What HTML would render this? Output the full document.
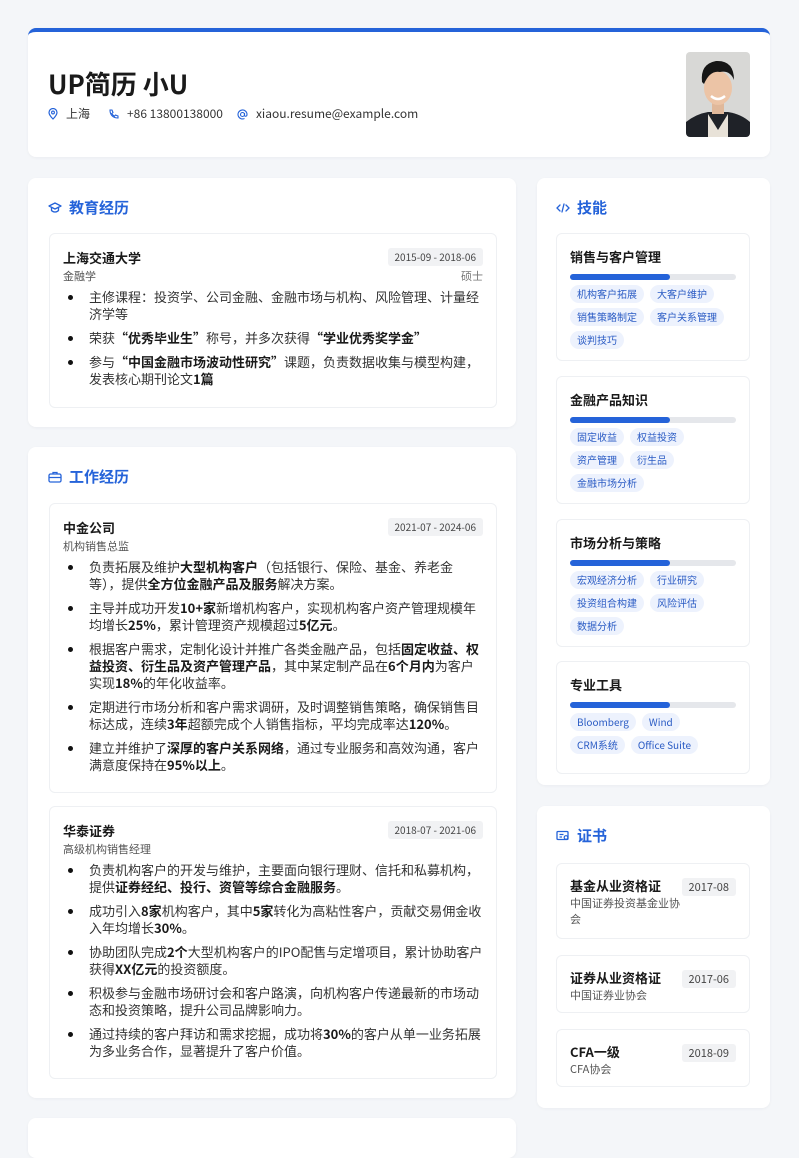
<!DOCTYPE html>
<html><head><meta charset="utf-8"><style>
*{box-sizing:border-box;margin:0;padding:0}
body{width:799px;height:1130px;background:#f4f6f9;font-family:"Noto Sans CJK SC","Liberation Sans",sans-serif;color:#333;position:relative;overflow:hidden}
.card{position:absolute;background:#fff;border-radius:8px;box-shadow:0 1px 3px rgba(0,0,0,.04)}
.hdr{left:28px;top:28px;width:742px;height:129px;border-top:4px solid #2563d9}
.name{position:absolute;left:20px;top:36px;font-size:26px;font-weight:700;color:#1a1a1a;line-height:32px}
.contact{position:absolute;left:20px;top:74px;font-size:12px;color:#333;display:flex;line-height:16px}
.contact span{display:flex;align-items:center;margin-right:14px}
.contact svg{margin-right:8px}
.photo{position:absolute;left:658px;top:20px;width:64px;height:85px;border-radius:4px;overflow:hidden}
.sec{font-size:15px;font-weight:700;color:#2563d9;display:flex;align-items:center;position:absolute;left:20px;top:20px;line-height:20px}
.sec svg{margin-right:7px}
.box{position:absolute;border:1px solid #eef0f3;border-radius:6px;background:#fff}
.l .box{left:21px;width:448px;padding:13px 13px 0 13px}
.t{display:flex;justify-content:space-between;align-items:center;height:20px}
.t b{font-size:13px;color:#1a1a1a;font-weight:700}
.date{font-size:10px;background:#f1f2f4;color:#444;padding:2px 7px;border-radius:3px;line-height:14px;white-space:nowrap}
.sub{display:flex;justify-content:space-between;font-size:11px;color:#555;line-height:16px;margin-top:1px}
ul{list-style:none;margin-top:4px}
li{position:relative;padding-left:26px;font-size:13px;line-height:17px;color:#333;margin-bottom:7px}
li:before{content:"";position:absolute;left:5px;top:7px;width:5px;height:5px;border-radius:50%;background:#111}
li b{color:#1a1a1a}
.r .box{left:19px;width:194px;padding:13px 13px 0 13px}
.sk{font-size:13px;font-weight:700;color:#1a1a1a;line-height:20px}
.bar{height:6px;background:#e5e7eb;border-radius:3px;margin-top:7px;margin-bottom:5px}
.bar i{display:block;width:60%;height:6px;background:#2563d9;border-radius:3px}
.tags{display:flex;flex-wrap:wrap;gap:5px 6px}
.tag{font-size:10px;color:#2a5bc4;background:#edf2fd;border-radius:9px;padding:0 7px;line-height:18px;white-space:nowrap}
.ct{display:flex;justify-content:space-between;align-items:flex-start;gap:6px;line-height:16px}
.ct>div{flex:1;min-width:0}
.ct b{display:block;font-size:13px;color:#1a1a1a;line-height:18px;margin-top:0}
.org{font-size:11px;color:#555;line-height:16px;width:112px}
.ct .date{margin-top:1px;flex:none}
</style></head><body>
<div class="card hdr">
<div class="name">UP简历 小U</div>
<div class="contact">
<span><svg width="10" height="12" viewBox="0 0 10 12"><path d="M5 11C2 8 1 6 1 4.5a4 4 0 0 1 8 0C9 6 8 8 5 11z" fill="none" stroke="#2563d9" stroke-width="1.2"/><circle cx="5" cy="4.5" r="1.4" fill="none" stroke="#2563d9" stroke-width="1.1"/></svg>上海</span>
<span style="margin-left:4px"><svg width="11" height="11" viewBox="0 0 11 11"><path d="M2 1l2 0 1 2.5-1.2 1a6 6 0 0 0 2.7 2.7l1-1.2 2.5 1v2c-5 0-8-3-8-8z" fill="none" stroke="#2563d9" stroke-width="1.1"/></svg>+86 13800138000</span>
<span><svg width="11" height="11" viewBox="0 0 11 11"><circle cx="5.5" cy="5.5" r="2" fill="none" stroke="#2563d9" stroke-width="1.1"/><path d="M7.5 4v2.2c0 1.5 2.5 1.5 2.5-.7A4.5 4.5 0 1 0 7.5 9.5" fill="none" stroke="#2563d9" stroke-width="1.1"/></svg>xiaou.resume@example.com</span>
</div>
<div class="photo"><svg width="64" height="85" viewBox="0 0 64 85"><rect width="64" height="85" fill="#d8d8d6"/><path d="M0 70 Q10 62 22 60 L42 60 Q55 62 64 70 L64 85 L0 85z" fill="#1f2228"/><path d="M22 62 L32 78 L42 62 L42 85 L22 85z" fill="#e8e2d8"/><rect x="26" y="48" width="12" height="14" fill="#e0b89a"/><ellipse cx="32" cy="36" rx="14" ry="17" fill="#ecc4a6"/><path d="M16 30 Q14 12 30 9 Q48 8 48 28 Q44 18 34 20 Q24 18 18 32z" fill="#161616"/><path d="M25 44 Q32 50 39 44" stroke="#fff" stroke-width="2.5" fill="none"/></svg></div>
</div>

<div class="card l" style="left:28px;top:178px;width:488px;height:249px">
<div class="sec"><svg width="14" height="12" viewBox="0 0 14 12"><path d="M7 1L1 4l6 3 6-3z M3.5 5.5v3c2 2 5 2 7 0v-3" fill="none" stroke="#2563d9" stroke-width="1.3" stroke-linejoin="round"/></svg>教育经历</div>
<div class="box" style="top:55px;height:175px">
<div class="t"><b>上海交通大学</b><span class="date">2015-09 - 2018-06</span></div>
<div class="sub"><span>金融学</span><span style="color:#777">硕士</span></div>
<ul>
<li>主修课程：投资学、公司金融、金融市场与机构、风险管理、计量经济学等</li>
<li>荣获<b>“优秀毕业生”</b>称号，并多次获得<b>“学业优秀奖学金”</b></li>
<li>参与<b>“中国金融市场波动性研究”</b>课题，负责数据收集与模型构建，发表核心期刊论文<b>1篇</b></li>
</ul></div>
</div>

<div class="card l" style="left:28px;top:447px;width:488px;height:651px">
<div class="sec"><svg width="14" height="12" viewBox="0 0 14 12"><rect x="1" y="3" width="12" height="8" rx="1.5" fill="none" stroke="#2563d9" stroke-width="1.3"/><path d="M5 3V1.5h4V3M1 6.5h12" fill="none" stroke="#2563d9" stroke-width="1.3"/></svg>工作经历</div>
<div class="box" style="top:56px;height:290px">
<div class="t"><b>中金公司</b><span class="date">2021-07 - 2024-06</span></div>
<div class="sub"><span>机构销售总监</span></div>
<ul>
<li>负责拓展及维护<b>大型机构客户</b>（包括银行、保险、基金、养老金等），提供<b>全方位金融产品及服务</b>解决方案。</li>
<li>主导并成功开发<b>10+家</b>新增机构客户，实现机构客户资产管理规模年均增长<b>25%</b>，累计管理资产规模超过<b>5亿元</b>。</li>
<li>根据客户需求，定制化设计并推广各类金融产品，包括<b>固定收益、权益投资、衍生品及资产管理产品</b>，其中某定制产品在<b>6个月内</b>为客户实现<b>18%</b>的年化收益率。</li>
<li>定期进行市场分析和客户需求调研，及时调整销售策略，确保销售目标达成，连续<b>3年</b>超额完成个人销售指标，平均完成率达<b>120%</b>。</li>
<li>建立并维护了<b>深厚的客户关系网络</b>，通过专业服务和高效沟通，客户满意度保持在<b>95%以上</b>。</li>
</ul></div>
<div class="box" style="top:359px;height:273px">
<div class="t"><b>华泰证券</b><span class="date">2018-07 - 2021-06</span></div>
<div class="sub"><span>高级机构销售经理</span></div>
<ul>
<li>负责机构客户的开发与维护，主要面向银行理财、信托和私募机构，提供<b>证券经纪、投行、资管等综合金融服务</b>。</li>
<li>成功引入<b>8家</b>机构客户，其中<b>5家</b>转化为高粘性客户，贡献交易佣金收入年均增长<b>30%</b>。</li>
<li>协助团队完成<b>2个</b>大型机构客户的IPO配售与定增项目，累计协助客户获得<b>XX亿元</b>的投资额度。</li>
<li>积极参与金融市场研讨会和客户路演，向机构客户传递最新的市场动态和投资策略，提升公司品牌影响力。</li>
<li>通过持续的客户拜访和需求挖掘，成功将<b>30%</b>的客户从单一业务拓展为多业务合作，显著提升了客户价值。</li>
</ul></div>
</div>
<div class="card" style="left:28px;top:1118px;width:488px;height:40px"></div>

<div class="card r" style="left:537px;top:178px;width:233px;height:607px">
<div class="sec" style="left:19px"><svg width="14" height="12" viewBox="0 0 14 12"><path d="M4 3L1 6l3 3M10 3l3 3-3 3M8 2L6 10" fill="none" stroke="#2563d9" stroke-width="1.3" stroke-linecap="round"/></svg>技能</div>
<div class="box" style="top:55px;height:128px"><div class="sk">销售与客户管理</div><div class="bar"><i></i></div><div class="tags"><span class="tag">机构客户拓展</span><span class="tag">大客户维护</span><span class="tag">销售策略制定</span><span class="tag">客户关系管理</span><span class="tag">谈判技巧</span></div></div>
<div class="box" style="top:198px;height:128px"><div class="sk">金融产品知识</div><div class="bar"><i></i></div><div class="tags"><span class="tag">固定收益</span><span class="tag">权益投资</span><span class="tag">资产管理</span><span class="tag">衍生品</span><span class="tag">金融市场分析</span></div></div>
<div class="box" style="top:341px;height:128px"><div class="sk">市场分析与策略</div><div class="bar"><i></i></div><div class="tags"><span class="tag">宏观经济分析</span><span class="tag">行业研究</span><span class="tag">投资组合构建</span><span class="tag">风险评估</span><span class="tag">数据分析</span></div></div>
<div class="box" style="top:483px;height:113px"><div class="sk">专业工具</div><div class="bar"><i></i></div><div class="tags"><span class="tag">Bloomberg</span><span class="tag">Wind</span><span class="tag">CRM系统</span><span class="tag">Office Suite</span></div></div>
</div>

<div class="card r" style="left:537px;top:806px;width:233px;height:302px">
<div class="sec" style="left:19px"><svg width="14" height="12" viewBox="0 0 14 12"><rect x="1" y="1.5" width="11" height="8" rx="1" fill="none" stroke="#2563d9" stroke-width="1.3"/><path d="M3.5 4.5h4M3.5 7h2.5" stroke="#2563d9" stroke-width="1.2"/><circle cx="10" cy="7.5" r="1.8" fill="#fff" stroke="#2563d9" stroke-width="1.2"/></svg>证书</div>
<div class="box" style="top:57px;height:76px"><div class="ct"><div><b>基金从业资格证</b><div class="org">中国证券投资基金业协会</div></div><span class="date" style="font-size:11px">2017-08</span></div></div>
<div class="box" style="top:149px;height:58px"><div class="ct"><div><b>证券从业资格证</b><div class="org">中国证券业协会</div></div><span class="date" style="font-size:11px">2017-06</span></div></div>
<div class="box" style="top:223px;height:58px"><div class="ct"><div><b>CFA一级</b><div class="org">CFA协会</div></div><span class="date" style="font-size:11px">2018-09</span></div></div>
</div>
</body></html>
